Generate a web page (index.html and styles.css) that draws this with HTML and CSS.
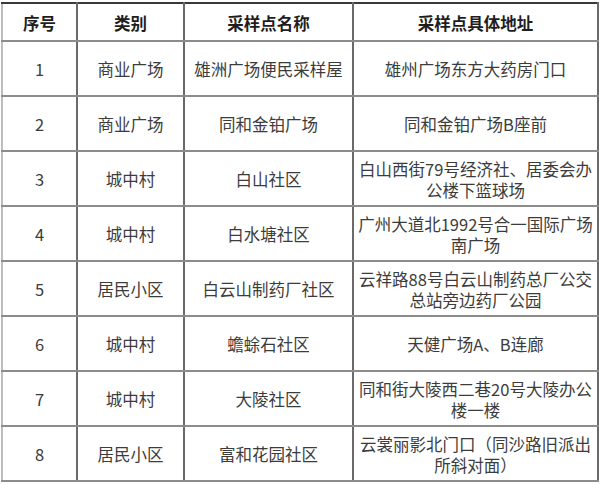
FILE: index.html
```html
<!DOCTYPE html>
<html lang="zh-CN">
<head>
<meta charset="utf-8">
<title>采样点</title>
<link rel="stylesheet" href="styles.css">
</head>
<body>
<table class="sites">
  <colgroup>
    <col class="c-no">
    <col class="c-type">
    <col class="c-name">
    <col class="c-addr">
  </colgroup>
  <thead>
    <tr class="head">
      <th>序号</th><th>类别</th><th>采样点名称</th><th>采样点具体地址</th>
    </tr>
  </thead>
  <tbody>
    <tr><td>1</td><td>商业广场</td><td>雄洲广场便民采样屋</td><td>雄州广场东方大药房门口</td></tr>
    <tr><td>2</td><td>商业广场</td><td>同和金铂广场</td><td>同和金铂广场B座前</td></tr>
    <tr><td>3</td><td>城中村</td><td>白山社区</td><td>白山西街79号经济社、居委会办公楼下篮球场</td></tr>
    <tr><td>4</td><td>城中村</td><td>白水塘社区</td><td>广州大道北1992号合一国际广场南广场</td></tr>
    <tr><td>5</td><td>居民小区</td><td>白云山制药厂社区</td><td>云祥路88号白云山制药总厂公交总站旁边药厂公园</td></tr>
    <tr><td>6</td><td>城中村</td><td>蟾蜍石社区</td><td>天健广场A、B连廊</td></tr>
    <tr><td>7</td><td>城中村</td><td>大陵社区</td><td>同和街大陵西二巷20号大陵办公楼一楼</td></tr>
    <tr><td>8</td><td>居民小区</td><td>富和花园社区</td><td>云裳丽影北门口（同沙路旧派出所斜对面）</td></tr>
  </tbody>
</table>
</body>
</html>
```

FILE: styles.css
```css
html, body {
  margin: 0;
  padding: 0;
  background: #ffffff;
}

body {
  font-family: "Noto Sans CJK SC", "Noto Sans", sans-serif;
  padding: 2px 0 0 1px;
}

.sites {
  border-collapse: collapse;
  table-layout: fixed;
  width: 596px;
}

.c-no { width: 75px; }
.c-type { width: 107px; }
.c-name { width: 169px; }
.c-addr { width: 245px; }

.sites th,
.sites td {
  border-top: 2px solid #8c8c8c;
  border-bottom: 2px solid #8c8c8c;
  border-left: 2px solid #6a6a6a;
  border-right: 2px solid #6a6a6a;
  text-align: center;
  vertical-align: middle;
  padding: 2px 4px 0;
  font-size: 16.5px;
  line-height: 21px;
}

.sites th {
  font-weight: bold;
  color: #1e1e1e;
  border-top-color: #3a3a3a;
}

.sites td {
  font-weight: normal;
  color: #3c3c3c;
}

.sites tr > :first-child {
  border-left-color: #bdbdbd;
}

.head { height: 38px; }
.sites tbody tr { height: 55px; }
```
